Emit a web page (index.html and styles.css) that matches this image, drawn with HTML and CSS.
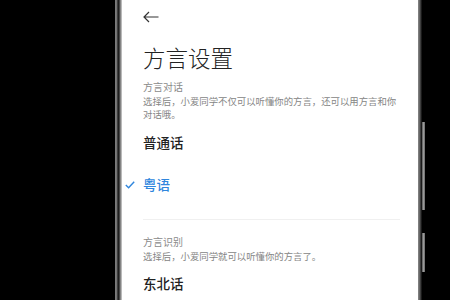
FILE: index.html
```html
<!DOCTYPE html>
<html lang="zh-CN">
<head>
<meta charset="utf-8">
<link rel="stylesheet" href="styles.css">
</head>
<body>
<div class="black-left"></div>
<div class="bezel-left"></div>
<div class="screen">
  <div class="header">
    <svg class="back" width="16" height="12" viewBox="0 0 16 12"><path d="M6 1 L1 6 L6 11 M1 6 H15.5" fill="none" stroke="#333" stroke-width="1.2"/></svg>
  </div>
  <div class="title">方言设置</div>
  <div class="label">方言对话</div>
  <div class="desc">选择后，小爱同学不仅可以听懂你的方言，还可以用方言和你对话哦。</div>
  <div class="option">普通话</div>
  <div class="option selected"><svg class="check" width="10" height="8" viewBox="0 0 10 8"><path d="M0.8 4 L3.6 6.8 L9.2 0.8" fill="none" stroke="#2f86dd" stroke-width="1.4"/></svg>粤语</div>
  <div class="divider"></div>
  <div class="label label2">方言识别</div>
  <div class="desc">选择后，小爱同学就可以听懂你的方言了。</div>
  <div class="option last">东北话</div>
</div>
<div class="bezel-right"></div>
<div class="side">
  <div class="btn btn1"></div>
  <div class="btn btn2"></div>
</div>
</body>
</html>
```
FILE: styles.css
```css
html, body {
  margin: 0;
  padding: 0;
}
body {
  width: 450px;
  height: 300px;
  overflow: hidden;
  background: #000;
  display: flex;
  font-family: "Noto Sans CJK SC", "Noto Sans", sans-serif;
}
.black-left {
  width: 115px;
  flex: none;
}
.bezel-left {
  width: 7px;
  flex: none;
  background: linear-gradient(to right, #6a6a6a 0, #8a8a8a 1px, #5a5a5a 2px, #1e1e1e 3px, #1e1e1e 4px, #6e6e6e 5px, #9a9a9a 6px, #d8d8d8 7px);
}
.screen {
  width: 296px;
  flex: none;
  background: #fff;
  padding-left: 21px;
  box-sizing: border-box;
  overflow: hidden;
}
.header {
  height: 34px;
  padding-top: 11px;
  box-sizing: border-box;
}
.back {
  display: block;
}
.title {
  font-size: 22.5px;
  font-weight: 300;
  line-height: 46px;
  height: 46px;
  color: #222;
}
.label {
  font-size: 10px;
  line-height: 14.5px;
  color: #8a8a8a;
}
.label2 {
  margin-top: 15.5px;
}
.desc {
  width: 257px;
  font-size: 9.4px;
  line-height: 13px;
  color: #858585;
}
.option {
  height: 42px;
  line-height: 42px;
  font-size: 13.5px;
  font-weight: 500;
  color: #222;
}
.option.selected {
  color: #2f86dd;
}
.option.last {
  height: 40px;
  line-height: 40px;
}
.check {
  margin-left: -18px;
  margin-right: 8px;
  vertical-align: 1px;
}
.divider {
  margin-top: 14px;
  width: 257px;
  height: 1px;
  background: #f0f0f0;
}
.bezel-right {
  width: 4px;
  flex: none;
  background: linear-gradient(to right, #8a8a8a 0, #5a5a5a 2px, #222 3px, #111 4px);
}
.side {
  width: 4px;
  flex: none;
  display: flex;
  flex-direction: column;
}
.btn {
  width: 3px;
  background: linear-gradient(to right, #555, #999 50%, #666);
}
.btn1 {
  margin-top: 122px;
  height: 88px;
}
.btn2 {
  margin-top: 23px;
  height: 39px;
}
```
